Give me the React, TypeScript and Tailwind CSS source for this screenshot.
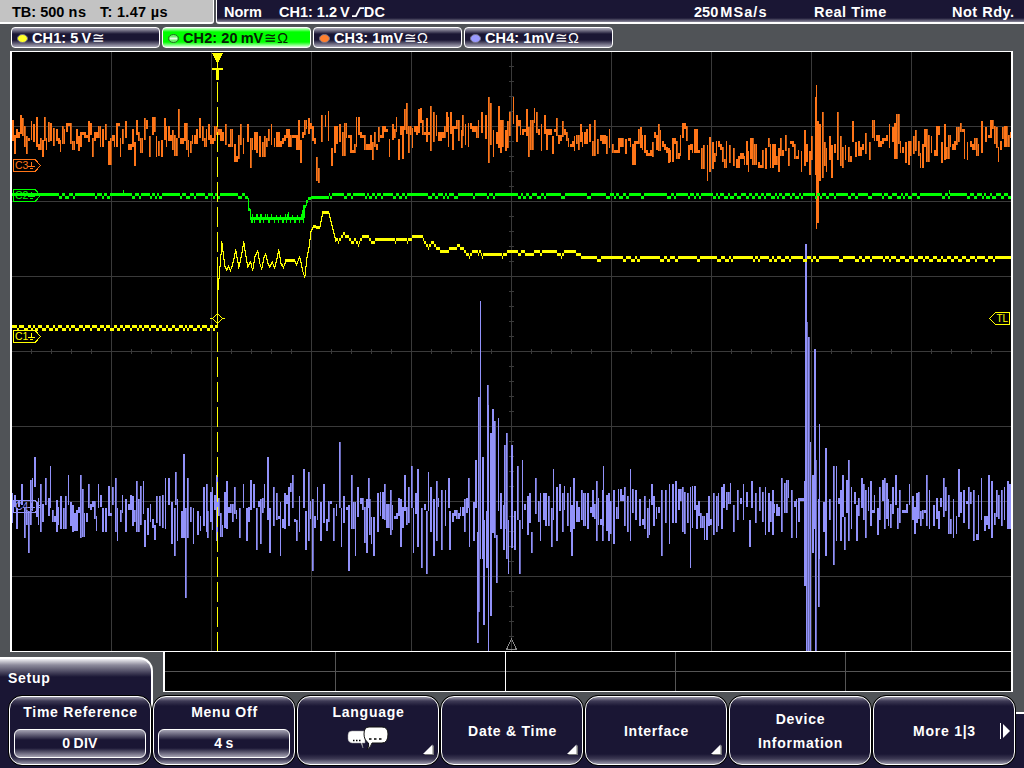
import React from 'react'

type Peak = [number, number, number];
type Point = [number, number];
type Bar = { x: number; top: number; bottom: number };

const ORANGE = "#ff7518";
const GREEN = "#00ff00";
const YELLOW = "#ffff00";
const BLUE = "#9292fa";

// x, top, bottom of the spikes that stand out of the noise
const orangePeaks: Peak[] = [
	[14, 135, 154], [20, 115, 134], [22, 118, 136], [26, 136, 154], [31, 121, 140], [33, 124, 142], [42, 140, 157], [48, 122, 142], [53, 128, 146], [60, 140, 152], [78, 136, 151],
	[88, 121, 142], [92, 138, 157], [105, 124, 140], [120, 138, 157], [125, 121, 138], [134, 142, 166], [144, 118, 140], [149, 136, 157], [156, 136, 157], [161, 140, 157],
	[164, 118, 140], [172, 130, 150], [178, 109, 138], [188, 140, 157], [199, 118, 138], [208, 124, 140], [225, 124, 145], [240, 124, 145], [243, 138, 154],
	[247, 124, 142], [259, 136, 157], [262, 142, 157], [264, 136, 157], [271, 124, 145], [300, 140, 163], [308, 118, 134], [316, 157, 181], [321, 115, 142], [325, 115, 127], [331, 148, 166], [339, 124, 142],
	[372, 142, 160], [378, 127, 142], [389, 139, 157], [392, 124, 140], [398, 139, 160], [404, 109, 130], [406, 103, 134], [412, 128, 148], [418, 109, 133], [426, 118, 142],
	[430, 106, 151], [433, 112, 142], [436, 115, 136], [446, 112, 132], [450, 112, 134], [461, 130, 148], [462, 115, 136], [465, 124, 145], [481, 112, 133],
	[485, 115, 139], [488, 97, 163], [490, 103, 145], [493, 130, 157], [498, 106, 148], [505, 130, 151], [507, 121, 148], [509, 112, 136], [513, 97, 124], [516, 115, 142], [526, 109, 136],
	[528, 127, 157], [536, 112, 133], [541, 124, 151], [544, 115, 134], [552, 136, 154], [556, 118, 136], [562, 121, 137], [574, 136, 151], [580, 124, 142], [589, 124, 142], [597, 139, 154],
	[606, 136, 154], [609, 129, 148], [625, 139, 154], [640, 127, 148], [652, 142, 157], [658, 124, 151], [660, 130, 151], [668, 148, 163], [688, 145, 160], [701, 148, 169], [703, 145, 169], [707, 145, 181], [709, 137, 172], [712, 142, 169],
	[729, 145, 163], [733, 148, 166], [748, 151, 172], [765, 148, 169], [778, 148, 172], [785, 135, 151], [788, 148, 166], [801, 151, 172], [804, 130, 166], [809, 151, 175],
	[811, 136, 160], [815, 97, 175], [816, 85, 229], [817, 121, 223], [819, 124, 181], [822, 112, 178], [824, 142, 166], [826, 148, 172], [829, 136, 160], [831, 145, 178], [837, 112, 160],
	[840, 136, 166], [845, 145, 160], [852, 121, 142], [855, 142, 157], [865, 133, 154], [869, 142, 160], [889, 124, 148], [892, 127, 142], [905, 142, 163], [913, 136, 154], [915, 130, 151],
	[931, 136, 153], [941, 142, 163], [944, 124, 160], [956, 127, 145], [958, 127, 142], [967, 142, 160], [981, 121, 153], [985, 127, 142], [996, 127, 148], [1002, 127, 139],
];

const bluePeaks: Peak[] = [
	[12, 493, 523], [16, 508, 529], [21, 484, 505], [24, 508, 538], [28, 511, 553], [32, 478, 511], [34, 457, 487], [36, 502, 517], [40, 484, 532], [45, 478, 505], [50, 466, 508], [56, 500, 532],
	[60, 496, 529], [63, 508, 529], [65, 496, 529], [68, 475, 505], [70, 502, 526], [72, 505, 532], [80, 475, 538], [88, 484, 508], [98, 484, 508], [102, 508, 532], [105, 508, 532], [112, 487, 505], [115, 478, 532], [117, 508, 541],
	[125, 499, 532], [132, 496, 526], [136, 481, 532], [138, 499, 532], [143, 481, 514], [144, 520, 547], [147, 508, 535], [156, 496, 523], [159, 496, 526], [165, 478, 529], [168, 478, 505], [171, 502, 544],
	[174, 508, 556], [175, 472, 505], [177, 499, 541], [181, 511, 538], [183, 454, 538], [185, 508, 598], [187, 478, 538], [193, 508, 544], [197, 511, 535], [203, 487, 526], [206, 484, 532],
	[207, 511, 538], [212, 487, 530], [216, 475, 541], [226, 481, 529], [234, 487, 514], [239, 508, 538], [243, 484, 508], [246, 508, 541], [253, 484, 508], [256, 508, 550], [260, 499, 544],
	[264, 484, 508], [267, 457, 520], [269, 508, 553], [273, 487, 526], [276, 493, 520], [280, 502, 556], [284, 493, 529], [288, 487, 526], [292, 475, 508], [296, 520, 541], [299, 496, 532],
	[303, 469, 508], [305, 511, 550], [308, 472, 541], [312, 499, 571], [317, 487, 520], [320, 502, 541], [323, 484, 523], [333, 508, 541], [339, 442, 508], [341, 508, 547], [343, 496, 523],
	[348, 505, 571], [351, 475, 529], [353, 502, 529], [355, 502, 556], [357, 487, 517], [366, 499, 553], [368, 478, 508], [369, 499, 535], [371, 517, 544], [373, 517, 556], [377, 493, 532], [384, 484, 520],
	[390, 490, 535], [392, 505, 530], [400, 499, 547], [404, 475, 511], [408, 487, 523], [411, 466, 508], [413, 508, 553], [415, 493, 514], [417, 469, 547], [421, 508, 568],
	[426, 511, 574], [428, 472, 511], [430, 487, 532], [433, 499, 556], [436, 481, 541], [441, 490, 550], [445, 490, 526], [448, 478, 508], [449, 511, 550], [464, 499, 532], [468, 478, 508],
	[469, 508, 547], [473, 502, 541], [475, 460, 508], [477, 532, 643], [478, 397, 612], [480, 301, 559], [482, 457, 559], [483, 520, 625], [486, 511, 568],
	[487, 385, 568], [488, 405, 652], [490, 433, 616], [492, 409, 533], [494, 421, 538], [496, 535, 583], [498, 418, 511], [500, 493, 529], [503, 505, 550], [504, 445, 529], [506, 433, 559],
	[508, 520, 574], [511, 445, 548], [514, 511, 550], [517, 466, 520], [519, 520, 574], [522, 460, 529], [527, 496, 535], [529, 493, 523], [531, 532, 553], [535, 478, 514],
	[540, 493, 541], [543, 493, 520], [545, 493, 526], [548, 496, 526], [551, 508, 547], [553, 469, 520], [556, 487, 541], [559, 484, 511], [562, 493, 532], [567, 493, 526], [570, 487, 532], [571, 505, 556], [573, 478, 529],
	[581, 490, 520], [583, 493, 526], [585, 493, 526], [587, 493, 529], [592, 490, 517], [596, 481, 541], [602, 490, 541], [603, 466, 526], [608, 493, 541], [613, 490, 544], [624, 487, 526], [627, 496, 532],
	[630, 469, 541], [635, 490, 520], [639, 499, 526], [644, 496, 529], [647, 508, 538], [649, 499, 535], [651, 484, 505], [653, 496, 526], [661, 490, 556], [665, 490, 523], [669, 484, 544],
	[672, 484, 523], [675, 481, 523], [682, 487, 532], [687, 493, 523], [690, 487, 568], [696, 505, 529], [708, 496, 526], [713, 493, 535], [716, 496, 532], [718, 493, 526], [721, 487, 529], [723, 484, 508],
	[733, 505, 532], [737, 490, 520], [743, 484, 520], [749, 520, 547], [751, 481, 508], [755, 493, 523], [759, 487, 511], [765, 487, 535], [768, 493, 532], [772, 490, 535], [781, 478, 532], [791, 490, 538], [796, 499, 538],
	[804, 481, 586], [805, 244, 586], [806, 322, 652], [808, 337, 652], [810, 442, 652], [812, 475, 553], [814, 349, 529], [815, 460, 652], [818, 499, 607],
	[819, 424, 559], [823, 502, 532], [825, 448, 556], [829, 499, 520], [833, 466, 565], [836, 466, 541], [840, 490, 541], [842, 475, 517], [844, 517, 550], [848, 460, 541], [851, 487, 529], [856, 505, 541], [861, 478, 508],
	[863, 484, 520], [865, 490, 538], [868, 487, 511], [870, 481, 526], [877, 508, 535], [879, 487, 520], [884, 478, 529], [888, 499, 526], [892, 487, 514], [895, 475, 505], [897, 508, 529], [899, 490, 523],
	[909, 484, 505], [912, 496, 520], [916, 493, 523], [920, 511, 526], [926, 475, 526], [929, 490, 529], [933, 505, 526], [938, 511, 529], [943, 478, 517], [945, 487, 511], [953, 499, 538], [958, 469, 517],
	[963, 490, 523], [968, 487, 529], [973, 490, 541], [981, 478, 520], [988, 475, 529], [991, 481, 538], [996, 490, 517], [1001, 490, 526], [1004, 487, 520], [1007, 481, 529], [1009, 484, 529],
];

const orangeCentre: Point[] = [
	[12, 138], [60, 136], [100, 139], [160, 139], [200, 136], [260, 140], [300, 138], [308, 126], [311, 138],
	[315, 158], [319, 155], [322, 126], [326, 120], [330, 148], [333, 146], [340, 136], [350, 142], [370, 142],
	[395, 137], [410, 126], [435, 130], [470, 130], [500, 132], [540, 131], [570, 137], [610, 143], [650, 146],
	[700, 149], [760, 153], [800, 150], [850, 149], [880, 142], [920, 142], [960, 140], [1011, 137],
];

const yellowCurve: Point[] = [
	[217, 290], [219, 267], [221, 242], [222, 250], [224, 265], [226, 269], [228, 266], [230, 270], [232, 263], [235, 250], [238, 267],
	[240, 258], [243, 242], [245, 255], [247, 266], [250, 262], [252, 269], [254, 257], [257, 251], [259, 262], [261, 268],
	[263, 258], [265, 254], [267, 262], [269, 266], [272, 262], [274, 267], [278, 250], [280, 262], [283, 267], [285, 260],
	[294, 260], [296, 264], [299, 257], [302, 270], [304, 276], [306, 258], [308, 248], [310, 232], [313, 226], [319, 227],
	[322, 212], [328, 212], [330, 220], [333, 232], [335, 240], [338, 242], [343, 234], [348, 238], [351, 242], [355, 241],
	[358, 245], [363, 236], [367, 236], [372, 244], [376, 239], [392, 239], [395, 242], [398, 239], [405, 239], [407, 242],
	[412, 238], [417, 236], [422, 236], [424, 243], [428, 248], [432, 242], [436, 248], [440, 251], [448, 251], [450, 248],
	[456, 248], [458, 246], [464, 251], [466, 254], [469, 257], [472, 253], [476, 252], [478, 254], [480, 252], [482, 257],
	[485, 254], [498, 254], [502, 257], [506, 254], [511, 251], [516, 253], [520, 254], [523, 252], [528, 256], [532, 254], [536, 252],
	[541, 254], [545, 251], [553, 251], [557, 254], [561, 257], [565, 252], [572, 251], [576, 254], [582, 257], [620, 257],
];

function createRandom(seed: number) {
	let s = seed;
	return () => {
		s = (s * 1664525 + 1013904223) % 4294967296;
		return s / 4294967296;
	};
}

function interpolate(points: Point[], x: number) {
	for (let i = 1; i < points.length; i++) {
		if (x <= points[i][0]) {
			const [x0, y0] = points[i - 1];
			const [x1, y1] = points[i];
			return y0 + ((y1 - y0) * (x - x0)) / (x1 - x0);
		}
	}
	return points[points.length - 1][1];
}

const snap = (y: number) => Math.round(y / 3) * 3;

function noiseBars(seed: number, centre: (x: number) => number, spread: number, peaks: Peak[]) {
	const random = createRandom(seed);
	const noise: Bar[] = [];
	let prev = snap(centre(12));
	for (let x = 12; x < 1011; x += 2) {
		const n = random() + random() + random() - 1.5;
		const y = snap(centre(x) + n * spread);
		noise.push({ x, top: Math.min(prev, y), bottom: Math.max(prev, y) + 3 });
		prev = y;
	}
	const free = noise.filter((bar) => !peaks.some(([x]) => Math.abs(x - bar.x) < 2));
	return [...free, ...peaks.map(([x, top, bottom]) => ({ x, top, bottom }))];
}

function columns(from: number, to: number, level: (x: number) => number) {
	let d = "";
	let prev = level(from);
	for (let x = from; x < to; x++) {
		const y = level(x);
		let top = Math.min(prev, y);
		let bottom = Math.max(prev, y);
		if (bottom - top > 3) {
			if (y > prev) top += 2;
			else bottom -= 2;
		} else {
			top = y;
			bottom = y;
		}
		d += `M${x + 0.5} ${top}V${bottom + 3}`;
		prev = y;
	}
	return d;
}

// Switches between two neighbouring levels, each held for a few pixels
function jitter(seed: number, high: number, low: number, calm: number) {
	const random = createRandom(seed);
	const levels: number[] = [];
	while (levels.length < 1024) {
		const highRun = random() < calm ? 8 + Math.floor(random() * 16) : 2 + Math.floor(random() * 4);
		const lowRun = 2 + Math.floor(random() * 3);
		for (let i = 0; i < highRun; i++) levels.push(high);
		for (let i = 0; i < lowRun; i++) levels.push(low);
	}
	return (x: number) => levels[x];
}

const NoiseTrace = ({ bars, color, dim }: { bars: Bar[]; color: string; dim: string }) => {
	const left = bars.map((b) => `M${b.x + 0.5} ${b.top}V${b.bottom}`).join("");
	const right = bars.filter((b, i) => i % 5 < 2 || b.bottom - b.top < 7).map((b) => `M${b.x + 1.5} ${b.top}V${b.bottom}`).join("");
	const rightDim = bars.filter((_, i) => i % 5 === 2 || i % 5 === 3).map((b) => `M${b.x + 1.5} ${b.top}V${b.bottom}`).join("");
	return (
		<g fill="none" strokeWidth={1}>
			<path d={rightDim} stroke={dim} />
			<path d={left} stroke={color} />
			<path d={right} stroke={color} />
		</g>
	);
};

const ChannelTag = ({ y, label, color }: { y: number; label: string; color: string }) => (
	<g stroke={color} fill="none">
		<path d={`M13.5 ${y - 5.5}H35L40.5 ${y + 0.5}L35 ${y + 6.5}H13.5Z`} />
		<text x={15} y={y + 4} fill={color} stroke="none" fontSize={10.5} fontWeight={400}>{label}</text>
		<path d={`M31.5 ${y - 3}V${y + 1}M28 ${y + 1.5}H35M30 ${y + 3.5}H33`} />
	</g>
);

const blueBars = noiseBars(77, () => 507, 25, bluePeaks);
const orangeBars = noiseBars(21, (x) => interpolate(orangeCentre, x) - 1, 19, orangePeaks);
const greenJitter = jitter(5, 193, 196, 0.3);
const yellowLow = jitter(9, 325, 328, 0);
const yellowHigh = jitter(14, 256, 259, 0.35);

const greenLevel = (x: number) => {
	if (x < 58) return 193;
	if (x < 248) return greenJitter(x);
	if (x < 250) return 208;
	if (x < 304) return 217;
	if (x < 306) return 205;
	if (x < 308) return 200;
	if (x < 311) return 197;
	if (x < 329) return 196;
	return greenJitter(x);
};

// Short spurs above and below the low part of the pulse
const dipSpurs = [
	[250, 209], [252, 214], [256, 214], [257, 214], [260, 214], [261, 214], [265, 214], [267, 214], [271, 214], [276, 215],
	[280, 215], [285, 214], [287, 214], [288, 212], [292, 215], [297, 215], [301, 214], [302, 210], [303, 205],
].map(([x, top]) => `M${x + 0.5} ${top}V220`).join("")
	+ [251, 252, 254, 259, 260, 263, 268, 269, 274, 278, 282, 283, 286, 290, 294, 295, 299, 303].map((x) => `M${x + 0.5} 219V223`).join("");

const yellowLevel = (x: number) => {
	if (x < 217) return yellowLow(x);
	if (x < 336) return Math.round(interpolate(yellowCurve, x)) - 1;
	if (x < 590) return snap(interpolate(yellowCurve, x)) - 2;
	return yellowHigh(x);
};

const Graph = () => (
	<svg className="block" width={999} height={599} viewBox="12 52 999 599" shapeRendering="crispEdges">
		<g stroke="#3a3a3a">
			{[111, 211, 311, 411, 511, 611, 711, 811, 911].map((x) => <path key={x} d={`M${x + 0.5} 52V651`} />)}
			{[126, 201, 276, 351, 426, 501, 576].map((y) => <path key={y} d={`M12 ${y + 0.5}H1011`} />)}
			{Array.from({ length: 49 }, (_, i) => 31 + i * 20).map((x) => <path key={x} d={`M${x + 0.5} 349V354`} />)}
			{Array.from({ length: 39 }, (_, i) => 66 + i * 15).map((y) => <path key={y} d={`M509 ${y + 0.5}H514`} />)}
		</g>
		<path d="M511.5 639L506.5 649.5H516.5Z" fill="none" stroke="#8a8a8a" />

		<NoiseTrace bars={blueBars} color={BLUE} dim="#6868b4" />
		<ChannelTag y={506} label="C4" color={BLUE} />
		<NoiseTrace bars={orangeBars} color={ORANGE} dim="#b85a18" />
		<ChannelTag y={165} label="C3" color={ORANGE} />
		<path d={columns(12, 1011, greenLevel)} stroke={GREEN} />
		<path d={dipSpurs} stroke={GREEN} />
		<path d="M123.5 190V194M949.5 190V194" stroke={GREEN} />
		<ChannelTag y={195} label="C2" color={GREEN} />
		<path d={columns(12, 1011, yellowLevel)} stroke={YELLOW} />
		<ChannelTag y={336} label="C1" color={YELLOW} />

		{/* Trigger position and level */}
		<path d="M217.5 82V651" stroke={YELLOW} strokeDasharray="20 5" />
		<path d="M217.5 267V328" stroke={YELLOW} />
		<path d="M212 53H223L218 63H217Z" fill={YELLOW} />
		<path d="M217.5 62V69" stroke={YELLOW} />
		<path d="M212 68H223V70H219V80H216V70H212Z" fill={YELLOW} />
		<path d="M217.5 313.5L222.5 318.5L217.5 323.5L212.5 318.5ZM210 318.5H213M222 318.5H225" fill="none" stroke={YELLOW} />
		<path d="M989.5 318.5L995.5 312.5H1009.5V324.5H995.5Z" fill="none" stroke={YELLOW} />
		<text x={996.5} y={322} fill={YELLOW} fontSize={10} fontWeight={400}>TL</text>
	</svg>
);

const channels = [
	{ name: "CH1: 5", unit: "V", color: "#ffff2a", ohm: false, active: false },
	{ name: "CH2: 20", unit: "mV", color: "#70f070", ohm: true, active: true },
	{ name: "CH3: 1", unit: "mV", color: "#ff8030", ohm: true, active: false },
	{ name: "CH4: 1", unit: "mV", color: "#9a9aff", ohm: true, active: false },
];

const ChannelButton = ({ channel }: { channel: typeof channels[number] }) => (
	<div className={`flex h-[21px] w-[149px] items-center rounded-[4px] border border-white pt-px pl-[5px] ${channel.active
		? "bg-[linear-gradient(#d0ffd0,#00ff00_4px,#00ff00_14px,#d8ffd8)] text-[#062006]"
		: "bg-[linear-gradient(#b0aebd,#1a1634_6px,#1a1634_12px,#aaa8b8)] text-white"}`}>
		<svg width={11} height={9} className="mr-[4px] shrink-0">
			<ellipse cx={5.5} cy={4.5} rx={5} ry={4} fill={channel.color} stroke={channel.active ? "#207020" : "#77758a"} />
			{channel.active && <path d="M2 4.5H9" stroke="#e8ffe8" strokeWidth={2} />}
		</svg>
		<span className="text-[14.5px] leading-none tracking-[0.1px] whitespace-pre">{channel.name}</span>
		<span className={`text-[14.5px] leading-none ${channel.name.endsWith("1") ? "" : "ml-[3px]"}`}>{channel.unit}</span>
		<span className="ml-px text-[14.5px] leading-none font-normal">≅{channel.ohm && "Ω"}</span>
	</div>
);

const LanguageIcon = () => (
	<svg width={42} height={24} viewBox="0 0 42 24">
		<path d="M5 5H18V17H15L16 22L14 17H5Q1 16 1 13V9Q1 5 5 5Z" fill="#fff" stroke="#999" strokeWidth={0.5} />
		<path d="M22 1H35Q41 1 41 8Q41 17 35 17H25Q24 21 20 23.5Q22.5 20 21.5 17Q17 14 17 8Q17 1 22 1Z" fill="#fff" stroke="#111" strokeWidth={1} />
		<path d="M6 14.5H7.5M9 14.5H10.5M12 14.5H13.5M22 13H24.5M27 13H29.5M32 13H34.5" stroke="#000" strokeWidth={1.5} />
	</svg>
);

const menu = [
	{ title: "Time Reference", value: "0 DIV" },
	{ title: "Menu Off", value: "4 s" },
	{ title: "Language", icon: true, sub: true },
	{ title: "Date & Time", sub: true },
	{ title: "Interface", sub: true },
	{ title: "Device\nInformation" },
	{ title: "More 1|3", more: true },
];

const MenuButton = ({ item }: { item: typeof menu[number] }) => (
	<div className="relative h-[71px] w-[144px] shrink-0 rounded-[14px] border border-black bg-black">
		<div className="flex h-full flex-col items-center justify-center rounded-[13px] border-[1.5px] border-white bg-[linear-gradient(#9a98aa,#3e3a55_4px,#1a1634_9px,#1a1634_57px,#3e3a55_62px,#9a98aa)] text-white">
			<div className="pl-px text-center text-[14px] leading-[24px] tracking-[0.75px] whitespace-pre">{item.title}</div>
			{item.value && (
				<div className="mt-[5px] mb-[4px] flex h-[29px] w-[132px] items-center justify-center rounded-[6px] border-[1.5px] border-white bg-[linear-gradient(#a5a3b3,#1a1634_10px,#1a1634_18px,#a5a3b3)] text-[14px] leading-none tracking-[0.3px] [word-spacing:-1px]">
					{item.value}
				</div>
			)}
			{item.icon && <div className="mt-[2px] mb-[12px] h-[24px]"><LanguageIcon /></div>}
		</div>
		{item.sub && (
			<svg className="absolute right-[5px] bottom-[10px]" width={11} height={11}>
				<path d="M1 11L11 1V11Z" fill="#777" />
				<path d="M0 10L9.5 0.5V10Z" fill="#fff" />
			</svg>
		)}
		{item.more && (
			<svg className="absolute top-[27px] right-[4px]" width={11} height={16}>
				<path d="M0.5 0V16" stroke="#fff" />
				<path d="M3 1L10 8L3 15Z" fill="#fff" />
			</svg>
		)}
	</div>
);

const App = () => {
	return (
		<div className="flex h-[768px] w-[1024px] flex-col overflow-hidden bg-[#505357] font-['Liberation_Sans',Arial,sans-serif] font-bold">
			<div className="flex h-[24px] shrink-0 gap-[2px] text-[14.5px] leading-[24px] whitespace-pre">
				<div className="w-[214px] rounded-br-[3px] border-r border-b-2 border-white bg-[#c3c3c3] pl-[12px] text-black">
					<span className="inline-block w-[88px]">TB: 500 <span className="tracking-[0.8px]">ns</span></span>
					<span className="tracking-[0.3px]">T: 1.47 µs</span>
				</div>
				<div className="flex flex-1 rounded-bl-[3px] border-b-2 border-l border-white bg-[linear-gradient(#1a1634_18px,#8a889a)] pl-[7px] text-white">
					<span className="w-[55px]">Norm</span>
					<span>CH1: 1.2</span>
					<span className="ml-[3px]">V</span>
					<svg className="mt-[6px] ml-[2px]" width={12} height={12}>
						<path d="M0 10H4L8 2H12" fill="none" stroke="#fff" strokeWidth={1.75} />
					</svg>
					<span className="tracking-[0.3px]">DC</span>
					<span className="ml-auto w-[120px]">250<span className="ml-[2px] tracking-[1.1px]">MSa/s</span></span>
					<span className="w-[138px] tracking-[0.5px]">Real Time</span>
					<span className="w-[72px] tracking-[0.5px]">Not Rdy.</span>
				</div>
			</div>

			<div className="flex h-[27px] shrink-0 gap-[2px] pt-[3px] pl-[11px]">
				{channels.map((channel) => <ChannelButton key={channel.name} channel={channel} />)}
			</div>

			<div className="ml-[10px] h-[601px] w-[1003px] shrink-0 border-x-2 border-y border-white bg-black">
				<Graph />
			</div>

			{/* Menu tab and the overview strip */}
			<div className="flex h-[43px] shrink-0">
				<div className="mt-[5px] h-[70px] w-[153px] shrink-0 rounded-tr-[14px] border-t-2 border-r-2 border-white bg-[linear-gradient(#f0f0f4,#8d8b9c_6px,#1a1634_18px)] pt-[9px] pl-[8px] text-[14px] leading-[20px] tracking-[0.7px] text-white">
					Setup
				</div>
				<div className="ml-[10px] h-[40px] w-[850px] border-r-2 border-b border-l-2 border-white bg-black">
					<svg className="block" width={846} height={39} viewBox="165 652 846 39" shapeRendering="crispEdges">
						<path d="M165 671.5H1011M335.5 652V691M675.5 652V691M845.5 652V691" stroke="#555" />
						<path d="M505.5 652V691" stroke="#fff" />
					</svg>
				</div>
			</div>

			<div className="z-10 flex h-[73px] shrink-0 bg-[linear-gradient(transparent_17px,#1a1634_17px)] pl-[8px]">
				{menu.map((item) => <MenuButton key={item.title} item={item} />)}
				<div className="mt-[17px] flex-1 border-t-2 border-white bg-[#1a1634]" />
			</div>
		</div>
	)
}

export default App
